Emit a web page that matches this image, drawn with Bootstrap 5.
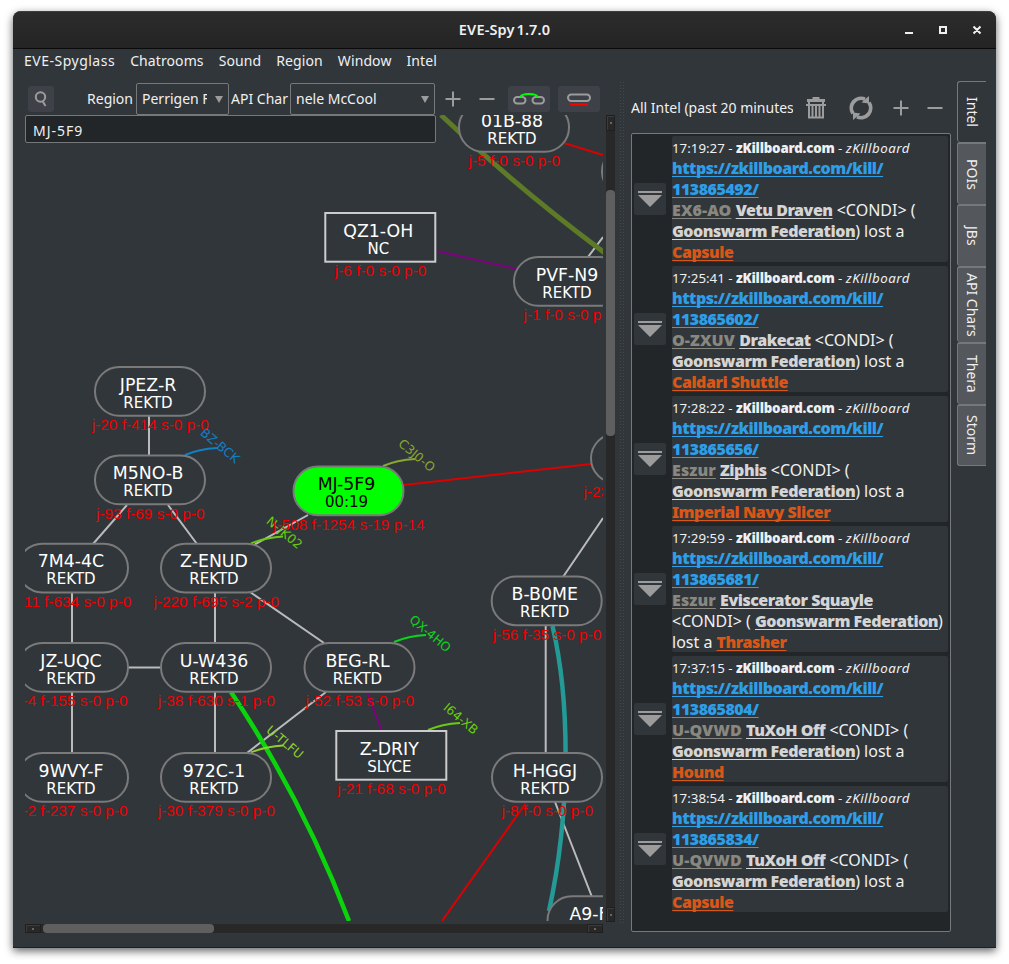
<!DOCTYPE html>
<html lang="en">
<head>
<meta charset="utf-8">
<title>EVE-Spy 1.7.0</title>
<link href="https://cdn.jsdelivr.net/npm/bootstrap@5.3.0/dist/css/bootstrap.min.css" rel="stylesheet">
<style>
body{background:#fff;font:14.67px/20px "Noto Sans",sans-serif;color:#eff0f1;height:964px;padding:11px 13px 0}
.spy-window{width:983px;height:937px;background:#31363b;border-radius:8px 8px 0 0;border-bottom:1px solid #1d2022;box-shadow:0 3px 9px rgba(0,0,0,.62);overflow:hidden}
.titlebar{height:38px;background:linear-gradient(#2c2c2c,#242424);border-top:1px solid #3d4043;border-bottom:1px solid #0b0b0b;font-weight:600;font-size:14.5px;word-spacing:-2px;letter-spacing:.15px}
.titlebar span{margin-top:-2px}
.titlebar svg{right:7px;top:11px}
.menus{height:26px;padding:2px 11px 0;gap:15px;font-size:14px;letter-spacing:.1px}
.menus span:first-child{letter-spacing:.5px}
.left-pane{width:590px;margin-left:12px}
.tools{height:40px;padding-top:8px;margin-left:-1px;font-size:14px}
.tool-btn{background:#3f4148;border-radius:3px;height:26px}
.combo{border:1px solid #76797c;border-radius:2px;height:32px;padding:0 5px;white-space:nowrap}
.combo .txt{overflow:hidden;flex:1}
.tri{border:4px solid transparent;border-top:7px solid #9c9c9c;border-bottom:0}
.map-grid{display:grid;grid-template:806px 14px / 578px 12px}
.finder{left:0;top:0;width:411px;height:28px;background:#232629;border:1px solid #76797c;border-radius:2px;padding:5px 7px;line-height:19px;font-size:14px;letter-spacing:1px}
.vbar{margin:0 0 -1px 3px;width:9px;background:#282828}
.vbar i,.hbar i{display:block;background:#5f5f5f;border-radius:4px}
.vbar i{height:246px;margin-top:59px}
.hbar{height:9px;margin-top:3px;background:#282828}
.hbar i{width:171px;height:9px;margin-left:2px}
.stepper{background:#282828;border:1px solid #1f1f1f;box-shadow:inset 1px 1px #3b3b3b;display:grid;place-items:center;flex:none}
.stepper::after{content:"";width:2px;height:2px;background:#666}
.grip{width:6px;margin:6px 6px 12px 4px;background:radial-gradient(circle,#44484d 0 .8px,transparent 1px) 0 0/3px 3px}
.right-pane{width:320px;padding-top:6px}
.feed-head{height:52px;padding-top:2px}
.feed-head .txt{width:162px;overflow:hidden;white-space:nowrap;font-size:14px}
.feed{height:799px;border:1px solid #76797c;border-radius:2px;background:#232629;padding:2px 2px;gap:4px}
.entry{gap:6px;height:126px}
.fold{width:32px;height:32px;background:#31363b;border-radius:2px;flex:none}
.msg{width:276px;background:#31363b;border-radius:2px;line-height:22px;font-size:16px;white-space:nowrap;overflow:hidden}
.msg>div{height:21px}
.msg .stamp{font-size:13.3px;line-height:24px}
.msg em{letter-spacing:.5px}
.msg u{font-weight:900;letter-spacing:-.48px;text-underline-offset:2px;text-decoration-thickness:1px;text-decoration-skip-ink:none}
.msg b{font-weight:900;letter-spacing:-.2px}
.kill{color:#2d9fe8}.msg .sys{color:#888880;letter-spacing:.1px}.who{color:#d5d5d5}.ship{color:#da5616}
.tabs{margin:6px 0 0 6px;width:29px;flex:none;font-size:14px}
.vtab{writing-mode:vertical-rl;width:29px;background:#54575b;border:1px solid #76797c;border-top-width:2px;border-bottom:0;border-right:0;border-radius:3px 0 0 3px;display:flex;align-items:center;justify-content:center;height:62px}
.vtab.on{background:#31363b;border-top-width:1px;height:61px}
.vtab:last-child{border-bottom:1px solid #76797c}
</style>
</head>
<body>
<main class="spy-window">
 <header class="titlebar position-relative d-flex align-items-center justify-content-center"><span>EVE-Spy 1.7.0</span>
  <svg class="position-absolute" width="86" height="14" fill="none" stroke="#eff0f1" stroke-width="2"><path d="M2 10h8M37 4h6v6h-6zM70.500 3.500l7 7M77.500 3.500l-7 7"/></svg>
 </header>
 <nav class="menus d-flex align-items-start"><span>EVE-Spyglass</span><span>Chatrooms</span><span>Sound</span><span>Region</span><span>Window</span><span>Intel</span></nav>
 <div class="d-flex">
  <section class="left-pane">
   <div class="tools d-flex align-items-center">
    <span class="tool-btn ms-1 d-grid" style="width:26px;place-items:center"><svg width="16" height="18" fill="none" stroke="#9c9c9c" stroke-width="2"><circle cx="7.500" cy="7" r="4.700"/><path d="M9.500 11l3 5"/></svg></span>
    <span class="text-end" style="width:79px">Region</span>
    <span class="combo d-flex align-items-center" style="width:93px;margin-left:3px"><span class="txt">Perrigen F</span><i class="tri ms-2"></i></span>
    <span class="text-center" style="width:61px">API Char</span>
    <span class="combo d-flex align-items-center" style="width:145px"><span class="txt">nele McCool</span><i class="tri ms-2"></i></span>
    <svg width="72" height="30" fill="none" stroke="#9c9c9c" stroke-width="2" class="flex-shrink-0"><path d="M10.500 15h15M18 7.500v15M44.500 15h15"/></svg>
    <span class="tool-btn flex-shrink-0" style="width:42px;margin-left:1px"><svg class="d-block" width="42" height="26" fill="none" stroke-width="2"><g stroke="#9c9c9c"><rect x="6" y="11" width="11.500" height="6.500" rx="3.200"/><rect x="24.500" y="11" width="11.500" height="6.500" rx="3.200"/></g><path d="M12.500 11c1-4 16-4 17 0" stroke="#0f0"/></svg></span>
    <span class="tool-btn flex-shrink-0" style="width:42px;margin-left:8px"><svg class="d-block" width="42" height="26" fill="none" stroke-width="2"><rect x="10" y="8.500" width="22" height="6.500" rx="3.200" stroke="#9c9c9c"/><path d="M12 18.500h18" stroke="#f00"/></svg></span>
   </div>
   <div class="map-grid">
    <div class="position-relative">
     <svg id="map" class="d-block" width="578" height="806" viewBox="25 115 578 806" fill="none">
      <g stroke="#bbb" stroke-width="2">
       <path d="M149 416V456M127 505L93 544M168 505L197 544M72 593V642M72 692V753M215 593V642M215 692V753M128 667.500H161M250 592L324 643M326 692L247 753M308 515L254 545M603 518L563 577M545.700 626V753M555 802L592 897M588 257L603 237"/>
      </g>
      <path d="M441 115Q517 188 605 253" stroke="#5d7a27" stroke-width="5"/>
      <path d="M231 692Q303 800 349 921" stroke="#0cd40c" stroke-width="4.500"/>
      <path d="M552.500 626C570 700 571 810 549 911" stroke="#239a95" stroke-width="4.500"/>
      <path d="M404 485L591 464M564 143L603 155M526 803L442 921" stroke="#d00" stroke-width="2"/>
      <path d="M437 251L517 269M367 692L382 731" stroke="#800080" stroke-width="2"/>
      <g id="stubs" stroke-width="2"></g>
      <g id="nodes"></g>
     </svg>
     <div class="finder position-absolute">MJ-5F9</div>
    </div>
    <div class="vbar d-flex flex-column"><span class="stepper" style="height:16px"></span><i></i><span class="stepper mt-auto" style="height:15px"></span></div>
    <div class="hbar d-flex"><span class="stepper" style="width:16px"></span><i></i><span class="stepper ms-auto" style="width:16px"></span></div>
   </div>
  </section>
  <div class="grip"></div>
  <section class="right-pane">
   <div class="feed-head d-flex align-items-center"><span class="txt">All Intel (past 20 minutes)</span>
    <svg width="156" height="30" fill="none" stroke="#9c9c9c" stroke-width="2"><path d="M14 7.500h18" stroke-width="3"/><path d="M13 12h20" stroke-width="2"/><path d="M19.500 5h7" stroke-width="2"/><path d="M16 9v15.500h14V9M19.500 12v12M23 12v12M26.500 12v12"/><path d="M60 20.500A9.700 9.700 0 0 1 72 6.200M76 9.500A9.700 9.700 0 0 1 64 23.800" stroke-width="3.800"/><path d="M68.500 9.500l7.500 1V3zM67.500 20.500l-7.500-1V27z" fill="#9c9c9c" stroke="none"/><path d="M100.500 15h15M108 7.500v15M134.500 15h15"/></svg>
   </div>
   <div class="feed d-flex flex-column" id="feed"></div>
  </section>
  <nav class="tabs"><div class="vtab on">Intel</div><div class="vtab">POIs</div><div class="vtab">JBs</div><div class="vtab" style="height:76px">API Chars</div><div class="vtab">Thera</div><div class="vtab">Storm</div></nav>
 </div>
</main>
<script src="https://cdn.jsdelivr.net/npm/bootstrap@5.3.0/dist/js/bootstrap.bundle.min.js"></script>
<script>
// left, top, name, owner, statistics, style
const systems=[
 [458,102,'01B-88','REKTD','j-5 f-0 s-0 p-0'],[601,146,'','',''],[324.3,212,'QZ1-OH','NC','j-6 f-0 s-0 p-0','box'],
 [513,256,'PVF-N9','REKTD','j-1 f-0 s-0 p-0'],[94,366,'JPEZ-R','REKTD','j-20 f-414 s-0 p-0'],[94,454.5,'M5NO-B','REKTD','j-93 f-69 s-0 p-0'],
 [292.5,465.5,'MJ-5F9','00:19','j-508 f-1254 s-19 p-14','hot'],[590,433,'','','j-23 f-1250 s-0 p-0'],
 [17,542.7,'7M4-4C','REKTD','j-11 f-634 s-0 p-0'],[160,542.7,'Z-ENUD','REKTD','j-220 f-695 s-2 p-0'],[490.7,575.5,'B-B0ME','REKTD','j-56 f-35 s-0 p-0'],
 [17,642,'JZ-UQC','REKTD','j-4 f-155 s-0 p-0'],[160,642,'U-W436','REKTD','j-38 f-630 s-1 p-0'],[303.5,642,'BEG-RL','REKTD','j-52 f-53 s-0 p-0'],
 [335.3,730,'Z-DRIY','SLYCE','j-21 f-68 s-0 p-0','box'],[17,752,'9WVY-F','REKTD','j-2 f-237 s-0 p-0'],[160,752,'972C-1','REKTD','j-30 f-379 s-0 p-0'],
 [491,752,'H-HGGJ','REKTD','j-8 f-0 s-0 p-0'],[546.5,895.3,'A9-F1R','REKTD','']];
nodes.innerHTML=systems.map(([x,y,n,o,s,k])=>{
 const ink=k=='hot'?'#000':'#fff',c=x+54;
 return `<rect x="${x+1}" y="${y+1}" width="110" height="48.700" rx="${k=='box'?0:24.3}" fill="${k=='hot'?'#0f0':'#31363b'}" stroke="${k=='box'?'#ccc':'#7a7a7a'}" stroke-width="2"/>
 <g text-anchor="middle" font-family="DejaVu Sans, sans-serif" fill="${ink}"><text x="${c}" y="${y+24.6}" font-size="17.330">${n}</text><text x="${c}" y="${y+41.6}" font-size="15">${o}</text></g>
 <text x="${x+56.3}" y="${y+64}" text-anchor="middle" font-family="Liberation Sans, sans-serif" font-size="15.400" fill="#e00">${s}</text>`}).join('');
// regional exits: curve start and exit name
stubs.innerHTML=[[185,455,'BZ-BCK','#0f80c4'],[383,466,'C3J0-O','#88a830'],[251,543.5,'N-JK02','#68cc10'],[394,642,'QX-4HO','#0cd41c'],[251,752.5,'U-TLFU','#8fd030'],[428,730,'I64-XB','#68cc10']]
 .map(([x,y,t,c])=>`<path d="M${x} ${y}q14-6 32-7" stroke="${c}"/><text transform="translate(${x+14.5} ${y-21}) rotate(40)" font-family="DejaVu Sans, sans-serif" font-size="12.500" fill="${c}">${t}</text>`).join('');
const lost='<u class="who">Goonswarm Federation</u>) lost a';
feed.innerHTML=[['17:19:27','113865492','EX6-AO','Vetu Draven','Capsule'],['17:25:41','113865602','O-ZXUV','Drakecat','Caldari Shuttle'],['17:28:22','113865656','Eszur','Ziphis','Imperial Navy Slicer'],['17:29:59','113865681','Eszur','Eviscerator Squayle','Thrasher'],['17:37:15','113865804','U-QVWD','TuXoH Off','Hound'],['17:38:54','113865834','U-QVWD','TuXoH Off','Capsule']]
 .map(([t,id,sys,who,ship])=>{
 const w=who.length>15;
 return `<div class="entry d-flex align-items-center"><span class="fold d-grid"><svg width="32" height="32" fill="#9c9c9c"><path d="M4 8h24v2H4zM4 12h24L16 24z"/></svg></span>
 <div class="msg"><div class="stamp">${t} - <b>zKillboard.com</b> - <em>zKillboard</em></div><div><u class="kill">https://zkillboard.com/kill/</u></div><div><u class="kill">${id}/</u></div>
 <div><u class="sys">${sys}</u> <u class="who">${who}</u>${w?'':' &lt;CONDI&gt; ('}</div><div>${w?'&lt;CONDI&gt; ( <u class="who">Goonswarm Federation</u>)':lost}</div><div>${w?'lost a ':''}<u class="ship">${ship}</u></div></div></div>`}).join('');
</script>
</body>
</html>
